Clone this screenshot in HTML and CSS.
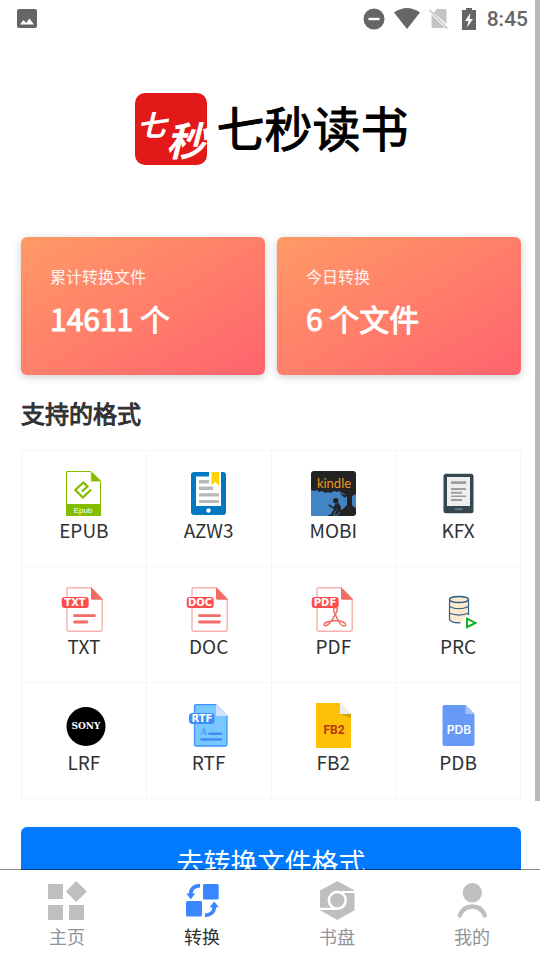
FILE: index.html
```html
<!DOCTYPE html>
<html lang="zh-CN">
<head>
<meta charset="utf-8">
<meta name="viewport" content="width=device-width, initial-scale=1">
<title>七秒读书</title>
<link rel="stylesheet" href="styles.css">
</head>
<body>
<div class="app">
  <main class="content">
    <div class="status">
      <svg class="status-icon" viewBox="0 0 20 22"><path fill-rule="evenodd" d="M2 1h16q2 0 2 2v15q0 2-2 2H2q-2 0-2-2V3q0-2 2-2zM3 16.500h14l-4.500-6-3.500 4.500-2.500-3z"/></svg>
      <div class="status-group">
        <svg class="status-icon round" viewBox="0 0 22 22"><circle cx="11" cy="11" r="10.500"/><path class="paper" d="M5.500 9.800h11v2.400h-11z"/></svg>
        <svg class="status-icon wide" viewBox="0 0 26 22"><path d="M0 4.500Q13-4.500 26 4.500L13 21z"/></svg>
        <svg class="status-icon faded" viewBox="0 0 20 22"><path d="M8 1h8q1.500 0 1.500 1.500V16L4.500 4.500zM2.500 6.500 16 20H4q-1.500 0-1.500-1.500z"/><path d="M.5 2 18.500 20.500" fill="none" stroke="currentColor" stroke-width="1.500"/></svg>
        <svg class="status-icon slim" viewBox="0 0 14 24"><path d="M4 1h6v2h4v20H0V3h4z"/><path class="paper" d="M8.500 6 3 14h3.500L5 20.500l6-8.500H7.500z"/></svg>
        <time class="clock">8:45</time>
      </div>
    </div>

    <header class="brand">
      <span class="brand-mark" aria-hidden="true"><span class="mark-first">七</span><span class="mark-second">秒</span></span>
      <h1 class="brand-name">七秒读书</h1>
    </header>

    <section class="stats">
      <div class="stat"><p class="stat-label">累计转换文件</p><p class="stat-value">14611 个</p></div>
      <div class="stat"><p class="stat-label">今日转换</p><p class="stat-value">6 个文件</p></div>
    </section>

    <h2 class="section-title">支持的格式</h2>
    <ul class="formats">
      <li class="format">
        <svg class="format-icon" viewBox="0 0 45 45"><path d="M5.500.5H30l9.500 9.500v34.500h-34z" fill="#fff" stroke="#84bd00"/><path d="M30 .5 40 10H30z" fill="#84bd00"/><path d="M30 0v10.500h10" fill="none" stroke="#c5e08a"/><path d="M5 33h35v12H5z" fill="#84bd00"/><path d="m21 20.500 5.500-5-4.200-4-8 7.500 7.600 7.500 8-7.800" fill="none" stroke="#84bd00" stroke-width="2.300"/><text class="epub-text" x="22" y="42">Epub</text></svg>
        <span>EPUB</span>
      </li>
      <li class="format">
        <svg class="format-icon" viewBox="0 0 45 45"><rect x="5" y="1" width="35" height="43" rx="3" fill="#0079c1"/><path d="M10 5.500h25V35H10zM23 1h12v12H23z" fill="#fff"/><path d="M25.500 1h7.500v14l-3.500-4-4 3z" fill="#ffd400"/><path d="M13 9h10v3.500H13zM13 15.500h14V19H13zM13 22.300h20v3.300H13zM13 29h20v3H13z" fill="#b9b9b9"/><circle cx="22.500" cy="39.500" r="2.200" fill="#fff"/></svg>
        <span>AZW3</span>
      </li>
      <li class="format">
        <svg class="format-icon" viewBox="0 0 45 45"><rect width="45" height="45" rx="3" fill="#232323"/><path d="M0 19l3 1 3-1 2 2 3-1 3 2 3-1 3 1 3-2 3 1 2-1 3 2 3 1 2 3v8l-4 4-6 3-6 6H3q-3 0-3-3z" fill="#4285c4"/><path d="m41 25 4-2v14q-3-1-4-3z" fill="#4285c4"/><path d="M29 21q2 3 6 3v3q-5-2-6-6z" fill="#232323"/><circle cx="24.800" cy="29.800" r="2.700" fill="#232323"/><path d="m16.500 33.500 3.500.5 2 2.500 2.500-3.500 3-1q3 3 2.500 8l5-3v8H16l4-2 3-5-3-1.500z" fill="#232323"/><path d="m25.500 38.500-3 5.500h4.500l1.500-3" fill="none" stroke="#4285c4" stroke-width=".8"/><text class="kindle-text" x="23" y="17">kindle</text></svg>
        <span>MOBI</span>
      </li>
      <li class="format">
        <svg class="format-icon" viewBox="0 0 45 45"><rect x="7.500" y="2.700" width="30" height="39.500" rx="2.500" fill="#37474f"/><path d="M11 6h23v29H11z" fill="#eee"/><path d="M15 10.300h15V13H15zM15 17h15v2H15zM15 20.700h11v2H15zM15 24.500h15V26H15zM15 28h11v2H15z" fill="#9e9e9e"/><path d="M19 37.200h7.500v2H19z" fill="#5d7884"/></svg>
        <span>KFX</span>
      </li>
      <li class="format">
        <svg class="format-icon" viewBox="0 0 45 45"><path d="M7.500.8H30L41.200 12v30.500q0 1.700-1.700 1.700h-32q-1.500 0-1.500-1.700v-40Q6 .8 7.500.8z" fill="#fff" stroke="#f5b1ad" stroke-width="1.400"/><path d="M30 0 42 12.700H31.500q-1.500 0-1.500-1.500z" fill="#f06c64"/><rect x=".7" y="10" width="27" height="11" rx="3" fill="#ff4d4f"/><text class="badge-text" x="14" y="19">TXT</text><path d="M13.500 28.700h20M13.500 35H26" stroke="#f06c64" stroke-width="2.800" stroke-linecap="round"/></svg>
        <span>TXT</span>
      </li>
      <li class="format">
        <svg class="format-icon" viewBox="0 0 45 45"><path d="M7.500.8H30L41.200 12v30.500q0 1.700-1.700 1.700h-32q-1.500 0-1.500-1.700v-40Q6 .8 7.500.8z" fill="#fff" stroke="#f5b1ad" stroke-width="1.400"/><path d="M30 0 42 12.700H31.500q-1.500 0-1.500-1.500z" fill="#f06c64"/><rect x=".7" y="10" width="27" height="11" rx="3" fill="#ff4d4f"/><text class="badge-text" x="14" y="19">DOC</text><path d="M13.500 28.700h20M13.500 35h20" stroke="#f06c64" stroke-width="2.800" stroke-linecap="round"/></svg>
        <span>DOC</span>
      </li>
      <li class="format">
        <svg class="format-icon" viewBox="0 0 45 45"><path d="M7.500.8H30L41.200 12v30.500q0 1.700-1.700 1.700h-32q-1.500 0-1.500-1.700v-40Q6 .8 7.500.8z" fill="#fff" stroke="#f5b1ad" stroke-width="1.400"/><path d="M30 0 42 12.700H31.500q-1.500 0-1.500-1.500z" fill="#f06c64"/><path d="M24.500 28c-3-5-2-7.500 0-7.500s2.500 2.500-.5 7.500-5 9-8.500 10.500c-2 1-3.500-1-1.500-2.500 4-2.500 14-3 18-1 4 2 3 4 1 4-3 0-6-5-8.500-11z" fill="none" stroke="#f06c64" stroke-width="1.500"/><rect x=".7" y="10" width="27" height="11" rx="3" fill="#ff4d4f"/><text class="badge-text" x="14" y="19">PDF</text></svg>
        <span>PDF</span>
      </li>
      <li class="format">
        <svg class="format-icon" viewBox="0 0 45 45"><path d="M13.500 12.500v20q2 3.500 11 3l3-4.500 5-3V12.500" fill="#fde9cf"/><path d="M13.500 12.500v20q1.500 3.500 11 3.300M32.500 12.500V28M13.500 19.500q9.500 4.500 19 0M13.500 26.300q9.500 3.500 19 0" fill="none" stroke="#2f5b85" stroke-width="1.200"/><ellipse cx="23" cy="12.500" rx="9.500" ry="3" fill="#fde9cf" stroke="#2f5b85" stroke-width="1.300"/><path d="m31 31.700 8.500 4.200-8.500 4.200z" fill="#fff" stroke="#0eb01a" stroke-width="1.900"/></svg>
        <span>PRC</span>
      </li>
      <li class="format">
        <svg class="format-icon" viewBox="0 0 45 45"><circle cx="25" cy="23.500" r="19.500"/><text class="sony-text" x="25" y="26">SONY</text></svg>
        <span>LRF</span>
      </li>
      <li class="format">
        <svg class="format-icon" viewBox="0 0 45 45"><path d="M10 1.700h20L41 13v28.500q0 1.500-1.500 1.500H10q-1.500 0-1.500-1.500V3.200q0-1.500 1.500-1.500z" fill="#79c7ff" stroke="#4093ff" stroke-width="1.300"/><path d="m30 1 12 12H31.500q-1.500 0-1.500-1.500z" fill="#cfe3ff"/><rect x="3" y="10" width="25.500" height="11" rx="3.500" fill="#3d8dfa"/><text class="badge-text" x="16" y="19">RTF</text><text class="serif-text" x="14" y="32">A</text><path d="M23.500 30.700h11.500M15.500 36.500H35" stroke="#3d8dfa" stroke-width="2.600" stroke-linecap="round"/></svg>
        <span>RTF</span>
      </li>
      <li class="format">
        <svg class="format-icon" viewBox="0 0 45 45"><path d="M5 0h24l11 11v34H5z" fill="#ffc107"/><path d="m29 0 11 11H29z" fill="#eee"/><path d="M29 11h11v4z" fill="#d19f08"/><text class="fb-text" x="23" y="31">FB2</text></svg>
        <span>FB2</span>
      </li>
      <li class="format">
        <svg class="format-icon" viewBox="0 0 45 45"><path d="M8.500 2h21l9 9v30q0 2-2 2h-28q-2 0-2-2V4q0-2 2-2z" fill="#6799f7"/><path d="m29.500 2 9 9h-8q-1 0-1-1z" fill="#a6c4fb"/><text class="pdb-text" x="23" y="31">PDB</text></svg>
        <span>PDB</span>
      </li>
    </ul>

    <button class="convert" type="button">去转换文件格式</button>
  </main>

  <nav class="tabs">
    <a class="tab" href="#home"><svg class="tab-icon" viewBox="0 0 40 40"><path d="M1 3h15v15H1zM1 24h15v15H1zM22 24h15v15H22zM29.300 0l10.500 10.400-10.500 10.500L18.900 10.400z"/></svg><span>主页</span></a>
    <a class="tab active" href="#convert" aria-current="page"><svg class="tab-icon" viewBox="0 0 40 40"><rect x="21" y="3" width="15.700" height="15.500" rx="1.500"/><rect x="4" y="20" width="16" height="15.500" rx="1.500"/><path d="M18 4.700Q9 5 8.700 13M23 34.300q9-.3 9.300-8.300" fill="none" stroke="currentColor" stroke-width="3.800"/><path d="M4.300 12.500h9L8.700 18.300zM27.500 26.200h9.300l-4.600-5.700z"/></svg><span>转换</span></a>
    <a class="tab" href="#disk"><svg class="tab-icon" viewBox="0 0 40 40"><path d="m20.300 0 17.300 9.500v19.800L20.300 39 3 29.300V9.500z"/><circle cx="20.300" cy="19.300" r="8.400" fill="none" stroke="#fff" stroke-width="2.600"/><path d="M38 11H20.300M3 27.800h17.300" fill="none" stroke="#fff" stroke-width="2.200"/></svg><span>书盘</span></a>
    <a class="tab" href="#me"><svg class="tab-icon" viewBox="0 0 40 40"><circle cx="20.300" cy="11.800" r="9.700"/><path d="M7.800 34.500Q11 25.500 20.300 25.500t12.500 9" fill="none" stroke="currentColor" stroke-width="4.400" stroke-linecap="round"/></svg><span>我的</span></a>
  </nav>
  <div class="scroll-thumb"></div>
</div>
</body>
</html>
```

FILE: styles.css
```css
* { box-sizing: border-box; }

body {
  margin: 0;
  background: #fff;
  color: #303133;
  font-family: "Noto Sans CJK SC", "Noto Sans", sans-serif;
}

h1, h2, p, ul { margin: 0; padding: 0; }

.app {
  position: relative;
  display: flex;
  flex-direction: column;
  height: 100vh;
}

.content {
  flex: 1;
  min-height: 0;
  overflow-y: auto;
  scrollbar-width: none;
  padding: 0 19px 28px 21px;
}

.status {
  display: flex;
  align-items: center;
  justify-content: space-between;
  height: 37px;
  margin: 0 -7px 0 -4px;
  color: #666;
}

.status-group { display: flex; align-items: center; gap: 9px; }
.status-icon { width: 20px; height: 22px; fill: currentColor; }
.status-icon.round { width: 22px; }
.status-icon.wide { width: 26px; }
.status-icon.slim { width: 14px; height: 24px; margin: 0 2px 0 4px; }
.status-icon.faded { color: #c4c4c4; }
.paper { fill: #fff; }

.clock {
  font: 500 21px/24px Roboto, sans-serif;
}

.brand {
  display: flex;
  align-items: center;
  justify-content: center;
  gap: 9px;
  padding: 56px 0 72px 2px;
}

.brand-mark {
  display: flex;
  justify-content: center;
  width: 72px;
  height: 72px;
  border-radius: 10px;
  background: #e31818;
  color: #fff;
  font-style: italic;
  font-weight: 700;
}

.mark-first { padding-top: 12px; font-size: 29px; line-height: 36px; }
.mark-second { align-self: flex-end; font-size: 40px; line-height: 52px; }

.brand-name {
  padding-bottom: 6px;
  color: #000;
  font-size: 48px;
  font-weight: 400;
  line-height: 66px;
  -webkit-text-stroke: 1px #000;
}

.stats {
  display: grid;
  grid-template-columns: 1fr 1fr;
  gap: 12px;
}

.stat {
  min-height: 138px;
  padding: 27px 29px;
  border-radius: 6px;
  background: linear-gradient(to bottom right, #ff9a66, #ff646e);
  box-shadow: 0 2px 8px rgba(0, 0, 0, 0.2);
  color: #fff;
}

.stat-label { font-size: 16px; line-height: 24px; opacity: 0.9; }

.stat-value {
  padding-top: 6px;
  font-size: 30px;
  line-height: 48px;
  -webkit-text-stroke: 1px #fff;
}

.section-title {
  margin: 20px 0 19px;
  font-size: 24px;
  font-weight: 400;
  line-height: 36px;
  -webkit-text-stroke: 1px #303133;
}

.formats {
  display: grid;
  grid-template-columns: repeat(4, 1fr);
  border: solid #f4f5f7;
  border-width: 1px 0 0 1px;
  list-style: none;
}

.format {
  display: flex;
  flex-direction: column;
  align-items: center;
  padding: 20px 0 22px;
  border: solid #f4f5f7;
  border-width: 0 1px 1px 0;
  font-size: 19px;
  line-height: 28px;
}

.format-icon { width: 45px; height: 45px; }
.format-icon text { text-anchor: middle; fill: #fff; }
.format-icon .epub-text { font: 8px "Liberation Sans", sans-serif; }
.format-icon .kindle-text { fill: #f0981f; font: 13px Lato, sans-serif; }
.format-icon .badge-text { font: 700 10px "DejaVu Sans", sans-serif; }
.format-icon .sony-text { font: 700 9px "DejaVu Serif", serif; }
.format-icon .serif-text { fill: #3d8dfa; font: 10px "Liberation Serif", serif; text-anchor: start; }
.format-icon .fb-text { fill: #b8360b; font: 700 12px Roboto, sans-serif; }
.format-icon .pdb-text { font: 600 12px Inter, sans-serif; }

.convert {
  display: block;
  width: 100%;
  height: 70px;
  margin-top: 28px;
  border: 0;
  border-radius: 6px;
  background: #007aff;
  color: #fff;
  font: 27px/40px "Noto Sans CJK SC", "Noto Sans", sans-serif;
}

.tabs {
  position: relative;
  display: grid;
  grid-template-columns: repeat(4, 1fr);
  height: 91px;
  margin-top: -1px;
  border-top: 1px solid rgba(0, 0, 0, 0.45);
  background: #fff;
  background-clip: padding-box;
}

.tab {
  display: flex;
  flex-direction: column;
  align-items: center;
  padding: 11px 1px 0 0;
  color: #909399;
  font-size: 18px;
  line-height: 30px;
  text-decoration: none;
}

.tab.active { color: #303133; }
.tab-icon { width: 40px; height: 40px; color: #bfbfbf; fill: currentColor; }
.tab.active .tab-icon { color: #3a86ff; }

.scroll-thumb {
  position: absolute;
  top: 0;
  right: 0;
  width: 5px;
  height: 83.4%;
  background: #b8b8b8;
}
```
